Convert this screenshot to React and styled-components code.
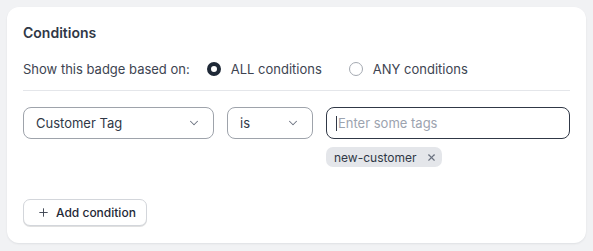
import React from 'react';
import styled, { createGlobalStyle } from 'styled-components';
import { ChevronDown, Plus, X } from 'lucide-react';

const Global = createGlobalStyle`
  html, body { margin: 0; background: #f1f2f4; }
  body { font-family: Inter, "Noto Sans", sans-serif; color: #303846; }
  * { box-sizing: border-box; }
`;

const Page = styled.div`
  padding: 7px;
`;

const Card = styled.section`
  width: 579px;
  background: #fff;
  border-radius: 12px;
  box-shadow: 0 1px 2px rgba(16,24,40,0.08);
  padding: 16px 16px 17px;
`;

const Title = styled.h2`
  margin: 0 0 16px;
  font-size: 14px; line-height: 20px; font-weight: 600;
  color: #303846;
`;

const MatchRow = styled.div`
  display: flex; align-items: center;
  height: 20px;
  font-size: 13px; color: #3d4451;
  margin-bottom: 11px;
`;

const Divider = styled.hr`
  margin: 0 0 16px; border: 0; border-top: 1px solid #e4e6ea;
`;

const Label = styled.span` margin-right: 17px; `;

const Radio = styled.label`
  display: inline-flex; align-items: center; gap: 10px;
  margin-right: 27px; cursor: pointer;
`;

const Dot = styled.span`
  width: 14px; height: 14px; border-radius: 50%;
  border: ${({checked}) => checked ? '4.5px solid #1f2937' : '1px solid #a4a9b1'};
  background: #fff;
`;

const Fields = styled.div`
  display: flex; align-items: flex-start; gap: 13px;
`;

const Select = styled.div`
  width: ${({w}) => w}px; height: 32px;
  display: flex; align-items: center; justify-content: space-between;
  padding: 0 12px;
  border: 1px solid #9ea3ab; border-radius: 8px;
  font-size: 13px; color: #303846;
  svg { color: #6b7280; }
`;

const TagCol = styled.div`
  flex: 1; display: flex; flex-direction: column; gap: 8px; align-items: flex-start;
`;

const TagInput = styled.div`
  width: 100%; height: 32px;
  display: flex; align-items: center;
  padding: 0 9px;
  border: 1.5px solid #303846; border-radius: 8px;
  font-size: 13px;
`;

const Caret = styled.span`
  width: 1px; height: 15px; background: #303846; margin-right: 1px;
`;

const Placeholder = styled.span` color: #9ca3af; `;

const Chip = styled.span`
  display: inline-flex; align-items: center; gap: 9px;
  height: 20px; padding: 0 5px 0 8px;
  background: #e4e6ea; border-radius: 7px;
  font-size: 12px; color: #303846;
  svg { color: #6b7280; }
`;

const AddButton = styled.button`
  margin-top: 32px;
  display: inline-flex; align-items: center; gap: 6px;
  height: 27px; padding: 0 10px 0 13px;
  background: #fff; border: 1px solid #d3d6db; border-radius: 7px;
  box-shadow: 0 1px 0 rgba(0,0,0,0.12);
  font: 500 12px Inter, sans-serif; color: #1f2937;
  svg { color: #3d4451; }
`;

export default function App(){
  return (
    <>
      <Global />
      <Page>
        <Card>
          <Title>Conditions</Title>
          <MatchRow>
            <Label>Show this badge based on:</Label>
            <Radio><Dot checked />ALL conditions</Radio>
            <Radio><Dot />ANY conditions</Radio>
          </MatchRow>
          <Divider />
          <Fields>
            <Select w={191}>Customer Tag<ChevronDown size={14} strokeWidth={1.75} /></Select>
            <Select w={86}>is<ChevronDown size={14} strokeWidth={1.75} /></Select>
            <TagCol>
              <TagInput><Caret /><Placeholder>Enter some tags</Placeholder></TagInput>
              <Chip>new-customer<X size={11} strokeWidth={2.5} /></Chip>
            </TagCol>
          </Fields>
          <AddButton><Plus size={13} strokeWidth={1.75} />Add condition</AddButton>
        </Card>
      </Page>
    </>
  );
}
